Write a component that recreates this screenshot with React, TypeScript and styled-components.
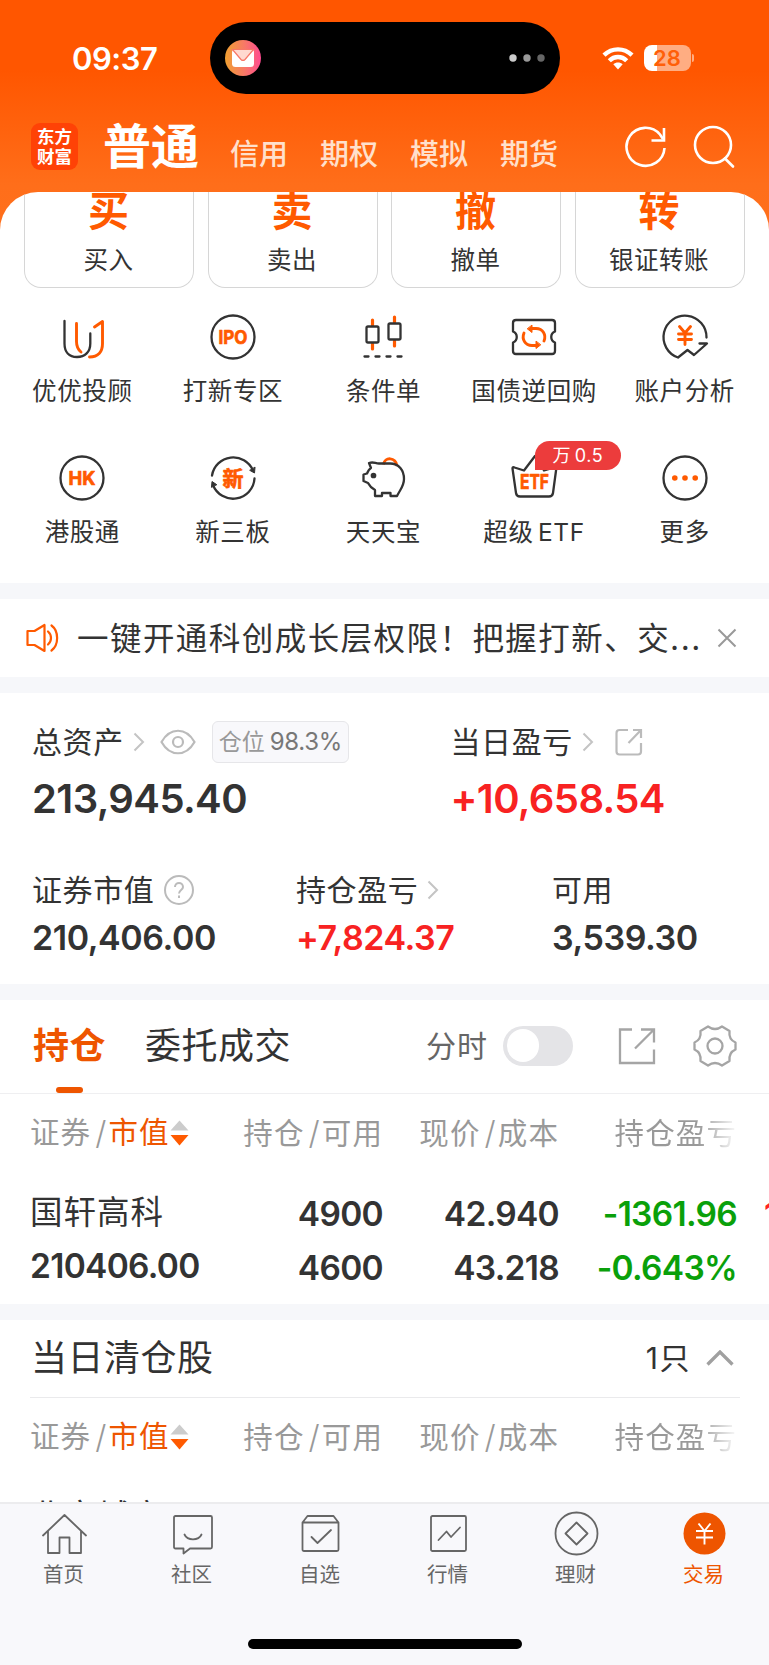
import React from 'react';
import styled, { createGlobalStyle } from 'styled-components';

const Global = createGlobalStyle`
  * { box-sizing: border-box; }
  body { margin: 0; background: #fff; }
`;

const Screen = styled.div`
  width: 769px;
  height: 1665px;
  overflow: hidden;
  display: flex;
  flex-direction: column;
  background: #fff;
  color: #333;
  font-family: Inter, 'Noto Sans CJK SC', sans-serif;
  line-height: 1;
  white-space: nowrap;
`;

/* ---------- header ---------- */
const Header = styled.header`
  height: 240px;
  flex: none;
  background: linear-gradient(#ff5600 0, #ff5600 70px, #ff6e1a 185px, #ff701c 240px);
  color: #fff;
`;
const StatusBar = styled.div`
  display: flex;
  align-items: center;
  height: 72px;
  margin-top: 22px;
`;
const HeaderInner = styled.div`
  display: flow-root;
`;
const Clock = styled.div`
  width: 209.5px;
  padding-left: 72px;
  font-size: 31px;
  font-weight: 600;
  letter-spacing: -0.5px;
`;
const Island = styled.div`
  width: 350px;
  height: 72px;
  border-radius: 36px;
  background: #000;
  display: flex;
  align-items: center;
  justify-content: space-between;
  padding: 0 14px 0 15px;
`;
const StatusIcons = styled.div`
  display: flex;
  align-items: center;
  gap: 10px;
  margin-left: 42px;
`;
const Battery = styled.div`
  display: flex;
  align-items: center;
  gap: 1.5px;
`;
const BatteryBody = styled.div`
  width: 47px;
  height: 26px;
  border-radius: 8px;
  background: linear-gradient(90deg, #fff 13px, #ffad82 13px);
  color: #ff5f08;
  font-size: 22px;
  font-weight: 600;
  display: flex;
  align-items: center;
  justify-content: center;
`;
const BatteryTip = styled.div`
  width: 2px;
  height: 8px;
  border-radius: 0 2px 2px 0;
  background: #ffad82;
`;
const NavBar = styled.div`
  display: flex;
  align-items: center;
  height: 98px;
  padding: 0 33px 0 31px;
`;
const Logo = styled.div`
  width: 47px;
  height: 47px;
  border-radius: 9px;
  background: #ff4206;
  display: flex;
  flex-direction: column;
  align-items: center;
  justify-content: center;
  font-size: 17.5px;
  font-weight: 700;
  line-height: 19.5px;
  margin-top: 7px;
`;
const NavMain = styled.div`
  font-size: 48px;
  font-weight: 700;
  margin: 7px 0 0 25px;
  width: 103px;
`;
const NavItem = styled.div`
  font-size: 29px;
  font-weight: 500;
  width: 90px;
  margin-top: 23px;
  color: #ffe0cc;
`;
const NavIcons = styled.div`
  display: flex;
  gap: 24px;
  margin: 7px 0 0 auto;
`;

/* ---------- shortcuts ---------- */
const Sheet = styled.main`
  position: relative;
  margin-top: -48px;
  height: 391px;
  flex: none;
  overflow: hidden;
  background: #fff;
  border-radius: 38px 38px 0 0;
`;
const CardRow = styled.div`
  display: flex;
  justify-content: space-between;
  padding: 0 24.5px 0 24px;
`;
const Card = styled.div`
  width: 170px;
  height: 96px;
  border: 1.5px solid #d6d6d6;
  border-top: 0;
  border-radius: 0 0 17px 17px;
  display: flex;
  flex-direction: column;
  align-items: center;
`;
const CardGlyph = styled.div`
  font-size: 41px;
  font-weight: 700;
  color: #ff5a00;
  line-height: 41px;
  margin: -1px 0 0 -1px;
`;
const CardLabel = styled.div`
  font-size: 24.5px;
  letter-spacing: 0.5px;
  line-height: 30px;
  margin: 13px 0 0 -1px;
`;
const Grid = styled.div`
  display: grid;
  grid-template-columns: repeat(5, 1fr);
  padding: 0 9px 0 7px;
  margin-top: 24px;
  row-gap: 41px;
`;
const Shortcut = styled.div`
  position: relative;
  display: flex;
  flex-direction: column;
  align-items: center;
  height: 100px;
  font-size: 24.5px;
  letter-spacing: 0.6px;
  svg { margin-bottom: 17px; }
`;
const Badge = styled.div`
  position: absolute;
  left: 76px;
  top: -12px;
  width: 86px;
  height: 29px;
  border-radius: 15px 15px 15px 0;
  background: #ec3c3c;
  color: #fff;
  font-size: 18px;
  letter-spacing: 0.6px;
  word-spacing: -2px;
  display: flex;
  align-items: center;
  justify-content: center;
`;

const Gap = styled.div<{ $h: number }>`
  height: ${(p) => p.$h}px;
  flex: none;
  background: #f6f7fa;
`;

/* ---------- notice ---------- */
const Notice = styled.div`
  height: 78px;
  flex: none;
  display: flex;
  align-items: center;
  padding-left: 26px;
  svg { flex: none; }
`;
const NoticeText = styled.div`
  font-size: 31.5px;
  letter-spacing: 1.45px;
  line-height: 40px;
  width: 625px;
  margin: 2px 15px 0 18px;
  overflow: hidden;
`;

/* ---------- assets ---------- */
const Assets = styled.section`
  height: 290.500px;
  flex: none;
  padding: 28px 32px 0;
`;
const TopFigures = styled.div`
  display: grid;
  grid-template-columns: 418.500px 1fr;
`;
const LowFigures = styled.div`
  display: grid;
  grid-template-columns: 264px 256px 1fr;
  margin-top: 46px;
`;
const LabelLine = styled.div`
  display: flex;
  align-items: center;
  height: 42px;
  font-size: 30px;
  letter-spacing: 0.6px;
`;
const Tag = styled.div`
  display: flex;
  align-items: center;
  justify-content: center;
  gap: 5px;
  width: 137px;
  height: 42px;
  margin-left: 16px;
  border: 1.5px solid #e6e6e9;
  border-radius: 6px;
  background: #f8f8fb;
  color: #999;
  font-size: 23px;
  letter-spacing: 0;
`;
const TagValue = styled.span`
  color: #777;
  font-size: 24px;
  letter-spacing: -0.35px;
`;
const BigFigure = styled.div<{ $c?: string }>`
  font-size: 40px;
  font-weight: 600;
  line-height: 48px;
  margin-top: 12px;
  letter-spacing: -0.6px;
  color: ${(p) => p.$c || '#333'};
`;
const Figure = styled.div<{ $c?: string }>`
  font-size: 34px;
  font-weight: 600;
  line-height: 40px;
  margin-top: 7px;
  letter-spacing: -0.45px;
  color: ${(p) => p.$c || '#333'};
`;
const Pad = styled.span<{ $l: number }>`
  display: flex;
  margin-left: ${(p) => p.$l}px;
`;

/* ---------- holdings ---------- */
const Tabs = styled.div`
  height: 94px;
  flex: none;
  border-bottom: 1.5px solid #efeff1;
  display: flex;
  align-items: center;
  padding: 0 32px 0 33px;
`;
const Tab = styled.div<{ $on?: boolean }>`
  position: relative;
  font-size: 36px;
  letter-spacing: 0.5px;
  line-height: 93px;
  margin-right: 39px;
  font-weight: ${(p) => (p.$on ? 700 : 400)};
  color: ${(p) => (p.$on ? '#ee5500' : '#333')};
  ${(p) => p.$on && `
    &::after {
      content: '';
      position: absolute;
      left: 23px;
      bottom: 0;
      width: 27px;
      height: 5.5px;
      border-radius: 3px;
      background: #ee5500;
    }
  `}
`;
const Tools = styled.div`
  display: flex;
  align-items: center;
  margin-left: auto;
  font-size: 30px;
  letter-spacing: 1px;
  color: #666;
`;
const Toggle = styled.div`
  width: 70px;
  height: 40px;
  border-radius: 20px;
  background: #e4e4e7;
  margin: 0 45px 0 15px;
  padding: 3px 4px;
`;
const Knob = styled.div`
  width: 32px;
  height: 33px;
  border-radius: 17px;
  background: #fff;
`;
const TableGrid = styled.div`
  display: grid;
  grid-template-columns: 170px 183px 176px 1fr;
  padding: 0 32px 0 31px;
  text-align: right;
  flex: none;
`;
const HeadRow = styled(TableGrid)`
  height: 78px;
  align-items: center;
  color: #999;
  font-size: 29.5px;
  letter-spacing: 1.1px;
  padding-left: 30px;
`;
const HeadFirst = styled.div`
  display: flex;
  align-items: center;
  em { font-style: normal; color: #ee5500; }
`;
const Slash = styled.span`
  margin: 0 1px 0 4px;
  font-size: 32px;
  font-weight: 300;
`;
const HeadFade = styled.div`
  color: transparent;
  background: linear-gradient(90deg, #999 78%, #fff 101%);
  background-clip: text;
  -webkit-background-clip: text;
  line-height: 44px;
`;
const StockRow = styled.div`
  display: flex;
  flex: none;
  height: 132px;
  padding-top: 16px;
  overflow: hidden;
`;
const StockGrid = styled(TableGrid)`
  width: 769px;
  grid-template-columns: 180px 173px 176px 1fr;
  grid-auto-rows: 54px;
  align-items: center;
  height: 108px;
  font-size: 33.5px;
  font-weight: 600;
  letter-spacing: -0.7px;
  padding-left: 30px;
`;
const Cell = styled.div<{ $c?: string; $left?: boolean }>`
  color: ${(p) => p.$c || '#333'};
  text-align: ${(p) => (p.$left ? 'left' : 'right')};
  ${(p) => p.$left && 'margin-top: -3px;'}
`;
const StockName = styled(Cell)`
  font-size: 32.5px;
  font-weight: 400;
  letter-spacing: 1px;
`;
const NextColumn = styled.div`
  flex: none;
  width: 40px;
  margin-left: -5px;
  margin-top: 6px;
  font-size: 33.5px;
  font-weight: 600;
  line-height: 42px;
  color: #f22;
`;
const ClearedHead = styled.div`
  height: 77.5px;
  flex: none;
  margin: 0 29px 0 30px;
  padding: 0 6px 0 1px;
  border-bottom: 1.5px solid #eaeaec;
  display: flex;
  align-items: center;
  font-size: 36px;
  letter-spacing: 0.5px;
`;
const Count = styled.div`
  display: flex;
  align-items: center;
  gap: 15px;
  margin-left: auto;
  font-size: 30px;
  letter-spacing: 1.5px;
`;
const Peek = styled.div`
  height: 26px;
  flex: none;
  overflow: hidden;
  padding: 23px 0 0 31px;
  font-size: 32.5px;
  letter-spacing: 1px;
  line-height: 36px;
`;

/* ---------- bottom bar ---------- */
const TabBar = styled.nav`
  height: 163px;
  flex: none;
  background: #f8f8fb;
  border-top: 2px solid #ececee;
  display: flex;
  flex-direction: column;
  align-items: center;
  justify-content: space-between;
  padding-bottom: 16px;
`;
const TabItems = styled.div`
  width: 769px;
  display: grid;
  grid-template-columns: repeat(6, 1fr);
  padding: 7.5px 1px 0 0;
`;
const TabItem = styled.div<{ $on?: boolean }>`
  display: flex;
  flex-direction: column;
  align-items: center;
  gap: 6px;
  font-size: 20.5px;
  line-height: 24px;
  color: ${(p) => (p.$on ? '#ee5500' : '#666')};
`;
const TabLabel = styled.div`
  margin-left: -1px;
`;
const HomeIndicator = styled.div`
  width: 274px;
  height: 10px;
  border-radius: 5px;
  background: #000;
`;

/* ---------- icons ---------- */
const D = '#333';
const O = '#ff5a00';

const Chevron = () => (
  <svg width="12" height="20" viewBox="0 0 12 20" fill="none" stroke="#c4c4c4" strokeWidth="2">
    <path d="M1.5 1.5 10 10 1.5 18.5" />
  </svg>
);
const Ico = ({ children }: { children: React.ReactNode }) => (
  <svg width="50" height="50" viewBox="0 0 50 50" fill="none" stroke={D} strokeWidth="2.3" strokeLinecap="round" strokeLinejoin="round">
    {children}
  </svg>
);
const glyph = { stroke: O, strokeWidth: 0.7, fill: O, textAnchor: 'middle' as const, fontWeight: 700, fontFamily: "Inter, 'Noto Sans CJK SC', sans-serif", letterSpacing: 0 };

const shortcuts: { label: string; badge?: string; icon: React.ReactNode }[] = [
  { label: '优优投顾', icon: <Ico>
    <path d="M7.5 9v22.5C7.5 40 12 45 20 45s13.3-5 13.3-13.500V21.500" />
    <path stroke={O} strokeWidth="2.900" d="M19.500 11.500v18c0 5 1.500 8 4.500 10.500M37.500 15l8-5.500v22c0 8-4 13.500-13 13.500" />
  </Ico> },
  { label: '打新专区', icon: <Ico><circle cx="25" cy="25" r="21.500" />
    <text x="25" y="32" fontSize="19" textLength="29" lengthAdjust="spacingAndGlyphs" {...glyph}>IPO</text></Ico> },
  { label: '条件单', icon: <Ico>
    <path stroke={O} strokeWidth="3.200" d="M14.500 8v5M14.500 32v5M36.500 5v5M36.500 29v5" />
    <rect x="8.500" y="14.500" width="12" height="16" rx="1.500" /><rect x="30.500" y="11.500" width="12" height="16" rx="1.500" />
    <path d="M6.500 44.500h4M17.500 44.500h4M28.500 44.500h4M39.500 44.500h4" />
  </Ico> },
  { label: '国债逆回购', icon: <Ico>
    <path d="M7 8h36q3 0 3 3v8.500c-5 2-5 9 0 11V39q0 3-3 3H7q-3 0-3-3v-8.500c5-2 5-9 0-11V11q0-3 3-3Z" />
    <path stroke={O} strokeWidth="2.900" d="M15 21c-2.500 6 1 12.500 8 12.500h4M35 29c2.500-6-1-12.500-8-12.500h-4" />
    <path stroke={O} fill={O} strokeWidth="1" d="M27 29.500v7l4.500-3.500ZM23 13.500v7l-4.500-3.500Z" />
  </Ico> },
  { label: '账户分析', icon: <Ico>
    <path d="M46.500 25.500A21.500 21.500 0 1 0 18 45.500L27.500 38l6.500 5 13-11.500h-7.500" />
    <path stroke={O} strokeWidth="2.900" d="M19.500 14.500 25 21l5.500-6.500M18.500 22h13M18.500 27.500h13M25 22v10.500" />
  </Ico> },
  { label: '港股通', icon: <Ico><circle cx="25" cy="25" r="21.500" />
    <text x="25" y="31.500" fontSize="19" textLength="27" lengthAdjust="spacingAndGlyphs" {...glyph}>HK</text></Ico> },
  { label: '新三板', icon: <Ico>
    <path d="M4 22.500A21.500 21.500 0 0 1 45 17.500M46.500 25.500A21.500 21.500 0 0 1 5 32" />
    <path fill={D} strokeWidth="1" d="M42 17.500l4.500 2.500.5-5.500ZM3.500 34l.5-5.500 4.500 3Z" />
    <text x="25" y="32.500" fontSize="21" {...glyph}>新</text>
  </Ico> },
  { label: '天天宝', icon: <Ico>
    <path stroke={O} strokeWidth="3" strokeLinecap="butt" d="M25.500 11.500c1-8 12.500-7.500 13.500 1.500" />
    <path d="M11 10c5-1.500 6 .5 10 .5h11c9 0 14 7 14 15.500 0 7-3.500 10-7 17h-6.500v-3h-8.500V43H17v-6c-3.500-2-5.500-4-7-7l-4.500-2v-6.500l3.500-1c1-2.500 2-4.500 4-5.500Z" />
    <circle cx="15.500" cy="22.500" r="1.700" fill={D} />
  </Ico> },
  { label: '超级 ETF', badge: '万 0.5', icon: <Ico>
    <path d="M15 17.500 26 3l9 14.500L47.500 14 44 40q-.5 3.500-4 3.500H11q-3.500 0-4-3.500L3.500 15.500q0-2 2-1Z" />
    <text x="25.500" y="36" fontSize="19.500" textLength="29" lengthAdjust="spacingAndGlyphs" {...glyph}>ETF</text>
  </Ico> },
  { label: '更多', icon: <Ico><circle cx="25" cy="25" r="21.500" />
    <g fill={O} stroke="none"><circle cx="14.800" cy="25" r="2.800" /><circle cx="25" cy="25" r="2.800" /><circle cx="35.200" cy="25" r="2.800" /></g></Ico> },
];

const ShortcutLabel = styled.div`
  margin-left: 0;
  word-spacing: -3px;
`;

const TabIco = ({ children }: { children: React.ReactNode }) => (
  <svg width="47" height="46" viewBox="0 0 47 46" fill="none" stroke="#666" strokeWidth="1.800" strokeLinecap="round" strokeLinejoin="round">
    {children}
  </svg>
);
const tabs: { label: string; on?: boolean; icon: React.ReactNode }[] = [
  { label: '首页', icon: <path d="M2 24.500 23.500 4 45 24.500M7 20v22h11.500V26.500h10V42H40V20" /> },
  { label: '社区', icon: <><path d="M6.500 5h35q1.500 0 1.500 1.500V36q0 1.500-1.500 1.500H21L14.500 42.500V37.500H6.500Q5 37.500 5 36V6.500Q5 5 6.500 5Z" /><path d="M15.500 23.500c3 6.500 14 6.500 17 0" /></> },
  { label: '自选', icon: <><path d="M5.500 11.500 10.500 5h26l5 6.500V38.500q0 1.500-1.500 1.500H7q-1.500 0-1.500-1.500ZM5.500 11.500h36" /><path d="m14.500 26 6 6L34 19" /></> },
  { label: '行情', icon: <><rect x="6" y="5" width="35" height="35" rx="1.500" /><path d="m13.500 29 8-8.500 4.500 5.500 9-9.500" /></> },
  { label: '理财', icon: <><circle cx="23.500" cy="22.500" r="21" /><path d="M23.500 11.500 34.500 22.500 23.500 33.500 12.500 22.500Z" /></> },
  { label: '交易', on: true, icon: <><circle cx="23.500" cy="22.500" r="21" fill="#ee5500" stroke="none" /><path stroke="#fff" strokeWidth="1.900" strokeLinecap="butt" d="M17.500 12.500l6 7.500 6-7.500M15 20h17M15 26.500h17M23.500 20v13.500" /></> },
];

const TableHead = () => (
  <HeadRow>
    <HeadFirst>
      证券<Slash>/</Slash><em>市值</em>
      <svg width="19" height="28" viewBox="0 0 19 28"><path d="M9.500 1.500 18.500 11.500H.5Z" fill="#ccc" /><path d="M9.500 26.500 18.500 16H.5Z" fill="#ff5a00" /></svg>
    </HeadFirst>
    <div>持仓<Slash>/</Slash>可用</div>
    <div>现价<Slash>/</Slash>成本</div>
    <HeadFade>持仓盈亏</HeadFade>
  </HeadRow>
);

export default function App() {
  return (
    <Screen>
      <Global />
      <Header>
        <HeaderInner>
          <StatusBar>
            <Clock>09:37</Clock>
            <Island>
              <svg width="36" height="36" viewBox="0 0 36 36">
                <defs><linearGradient id="mail"><stop offset="0" stopColor="#f0a030" /><stop offset=".55" stopColor="#f87868" /><stop offset="1" stopColor="#ff4a90" /></linearGradient></defs>
                <circle cx="18" cy="18" r="18" fill="url(#mail)" />
                <rect x="7" y="9" width="22" height="18" rx="3.500" fill="#fff" />
                <path d="M7.500 9.500h21L20 19.500q-2 2-4 0Z" fill="#ffd9d0" stroke="#f87868" strokeWidth="1.200" />
              </svg>
              <svg width="38" height="10" viewBox="0 0 38 10"><circle cx="5" cy="5" r="3.700" fill="#ccc" /><circle cx="19" cy="5" r="3.700" fill="#999" /><circle cx="33" cy="5" r="3.700" fill="#666" /></svg>
            </Island>
            <StatusIcons>
              <svg width="32" height="24" viewBox="0 0 32 24" fill="none" stroke="#fff" strokeWidth="4.400">
                <path d="M2 9.200c8-7.800 20-7.800 28 0" /><path d="M7.300 14.800c5-5 12.400-5 17.400 0" />
                <path d="M16 23.500 11.300 18.300c2.700-2.300 6.700-2.300 9.400 0Z" fill="#fff" stroke="none" />
              </svg>
              <Battery><BatteryBody>28</BatteryBody><BatteryTip /></Battery>
            </StatusIcons>
          </StatusBar>
          <NavBar>
            <Logo><span>东方</span><span>财富</span></Logo>
            <NavMain>普通</NavMain>
            <Pad $l={24} />
            {['信用', '期权', '模拟', '期货'].map((t) => <NavItem key={t}>{t}</NavItem>)}
            <NavIcons>
              <svg width="44" height="44" viewBox="0 0 44 44" fill="none" stroke="#fff" strokeWidth="2.600">
                <path d="M40.500 23A19 19 0 1 1 36 9.500L39 14" /><path d="M40 3v12.500H27.500" />
              </svg>
              <svg width="44" height="44" viewBox="0 0 44 44" fill="none" stroke="#fff" strokeWidth="2.600" strokeLinecap="round">
                <circle cx="21" cy="20" r="18" /><path d="M33 33.500 41 41.500" />
              </svg>
            </NavIcons>
          </NavBar>
        </HeaderInner>
      </Header>

      <Sheet>
        <CardRow>
          {[['买', '买入'], ['卖', '卖出'], ['撤', '撤单'], ['转', '银证转账']].map(([g, l]) => (
            <Card key={g}><CardGlyph>{g}</CardGlyph><CardLabel>{l}</CardLabel></Card>
          ))}
        </CardRow>
        <Grid>
          {shortcuts.map((s) => (
            <Shortcut key={s.label}>{s.icon}<ShortcutLabel>{s.label}</ShortcutLabel>{s.badge && <Badge><span>{s.badge}</span></Badge>}</Shortcut>
          ))}
        </Grid>
      </Sheet>

      <Gap $h={16} />
      <Notice>
        <svg width="33" height="30" viewBox="0 0 33 30" fill="none" stroke="#ff5a00" strokeWidth="2.200" strokeLinejoin="round" strokeLinecap="round">
          <path d="M1.500 8h7L18.500 2v26L8.500 22h-7Z" /><path d="M22 8.500c4 3.500 4 9.500 0 13M25.500 2.500c7.500 5.500 7.500 19.500 0 25" />
        </svg>
        <NoticeText>一键开通科创成长层权限！把握打新、交...</NoticeText>
        <svg width="20" height="20" viewBox="0 0 20 20" stroke="#999" strokeWidth="2"><path d="M1.500 1.500 18.500 18.500M18.500 1.500 1.500 18.500" /></svg>
      </Notice>
      <Gap $h={16} />

      <Assets>
        <TopFigures>
          <div>
            <LabelLine>
              总资产
              <Pad $l={9}><Chevron /></Pad>
              <Pad $l={15}>
                <svg width="36" height="26" viewBox="0 0 36 26" fill="none" stroke="#bbb" strokeWidth="2.200"><path d="M1.500 13C10-2 26-2 34.500 13 26 28 10 28 1.500 13Z" /><circle cx="18" cy="13" r="5" /></svg>
              </Pad>
              <Tag>仓位<TagValue>98.3%</TagValue></Tag>
            </LabelLine>
            <BigFigure>213,945.40</BigFigure>
          </div>
          <div>
            <LabelLine>
              当日盈亏
              <Pad $l={9}><Chevron /></Pad>
              <Pad $l={21}>
                <svg width="28" height="28" viewBox="0 0 28 28" fill="none" stroke="#bbb" strokeWidth="2.200"><path d="M13 2H4.500Q1.500 2 1.500 5V23.500q0 3 3 3H23q3 0 3-3V15M18 2h8v8M26 2 13.500 15" /></svg>
              </Pad>
            </LabelLine>
            <BigFigure $c="#f82222">+10,658.54</BigFigure>
          </div>
        </TopFigures>
        <LowFigures>
          <div>
            <LabelLine>
              证券市值
              <Pad $l={9}>
                <svg width="32" height="32" viewBox="0 0 32 32" fill="none" stroke="#bbb" strokeWidth="2"><circle cx="16" cy="16" r="14" /><path d="M12 13c0-5.500 8-5.500 8 0 0 3-4 3-4 6.500M16 21.500v2.500" /></svg>
              </Pad>
            </LabelLine>
            <Figure>210,406.00</Figure>
          </div>
          <div>
            <LabelLine>持仓盈亏<Pad $l={9}><Chevron /></Pad></LabelLine>
            <Figure $c="#f82222">+7,824.37</Figure>
          </div>
          <div>
            <LabelLine>可用</LabelLine>
            <Figure>3,539.30</Figure>
          </div>
        </LowFigures>
      </Assets>
      <Gap $h={16} />

      <Tabs>
        <Tab $on>持仓</Tab>
        <Tab>委托成交</Tab>
        <Tools>
          分时
          <Toggle><Knob /></Toggle>
          <svg width="38" height="38" viewBox="0 0 38 38" fill="none" stroke="#a5a5a5" strokeWidth="2.300"><path d="M14 2.500H2V36H36V22.500M23 2.500h13v13M36 2.500 17 21.500" /></svg>
          <Pad $l={37}>
            <svg width="44" height="44" viewBox="0 0 44 44" fill="none" stroke="#a5a5a5" strokeWidth="2.300" strokeLinejoin="round">
              <path d="M15 2.500q7 5 14 0l7.500 4.500q-1 8.500 6 11.500v7q-7 3-6 11.500L29 41.500q-7-5-14 0L7.500 37q1-8.500-6-11.500v-7q7-3 6-11.500Z" /><circle cx="22" cy="22" r="7.500" />
            </svg>
          </Pad>
        </Tools>
      </Tabs>
      <TableHead />
      <StockRow>
        <StockGrid>
          <StockName $left>国轩高科</StockName><Cell>4900</Cell><Cell>42.940</Cell><Cell $c="#0aa00a">-1361.96</Cell>
          <Cell $left>210406.00</Cell><Cell>4600</Cell><Cell>43.218</Cell><Cell $c="#0aa00a">-0.643%</Cell>
        </StockGrid>
        <NextColumn>1</NextColumn>
      </StockRow>
      <Gap $h={16.5} />

      <ClearedHead>
        当日清仓股
        <Count>1只<svg width="28" height="16" viewBox="0 0 28 16" fill="none" stroke="#a0a0a0" strokeWidth="3.300"><path d="M1.500 14.500 14 2 26.500 14.500" /></svg></Count>
      </ClearedHead>
      <TableHead />
      <Peek>北京城市</Peek>

      <TabBar>
        <TabItems>
          {tabs.map((t) => <TabItem key={t.label} $on={t.on}><TabIco>{t.icon}</TabIco><TabLabel>{t.label}</TabLabel></TabItem>)}
        </TabItems>
        <HomeIndicator />
      </TabBar>
    </Screen>
  );
}
